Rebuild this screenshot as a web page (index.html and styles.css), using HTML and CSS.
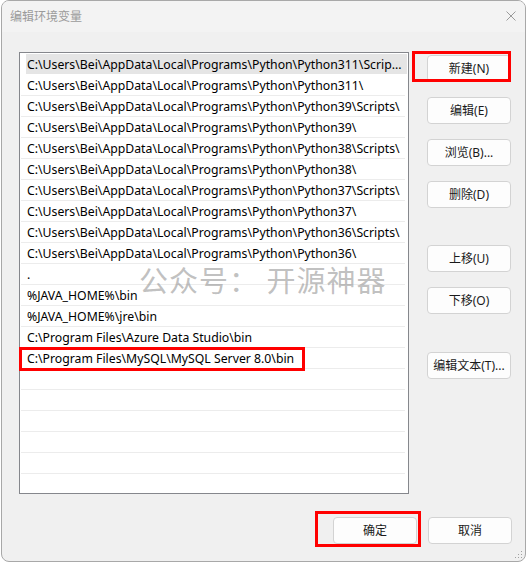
FILE: index.html
```html
<!DOCTYPE html>
<html lang="zh-CN">
<head>
<meta charset="utf-8">
<title>编辑环境变量</title>
<link rel="stylesheet" href="styles.css">
</head>
<body>
<div class="window">
  <div class="titlebar">
    <span class="title">编辑环境变量</span>
    <svg class="close" width="10" height="10" viewBox="0 0 10 10"><path d="M0.5 0.5 L9.5 9.5 M9.5 0.5 L0.5 9.5" stroke="#9a9a9a" stroke-width="1" fill="none"/></svg>
  </div>
  <div class="content">
    <div class="main">
      <div class="list">
        <div class="row selected">C:\Users\Bei\AppData\Local\Programs\Python\Python311\Scrip...</div>
        <div class="row">C:\Users\Bei\AppData\Local\Programs\Python\Python311\</div>
        <div class="row">C:\Users\Bei\AppData\Local\Programs\Python\Python39\Scripts\</div>
        <div class="row">C:\Users\Bei\AppData\Local\Programs\Python\Python39\</div>
        <div class="row">C:\Users\Bei\AppData\Local\Programs\Python\Python38\Scripts\</div>
        <div class="row">C:\Users\Bei\AppData\Local\Programs\Python\Python38\</div>
        <div class="row">C:\Users\Bei\AppData\Local\Programs\Python\Python37\Scripts\</div>
        <div class="row">C:\Users\Bei\AppData\Local\Programs\Python\Python37\</div>
        <div class="row">C:\Users\Bei\AppData\Local\Programs\Python\Python36\Scripts\</div>
        <div class="row">C:\Users\Bei\AppData\Local\Programs\Python\Python36\</div>
        <div class="row">.</div>
        <div class="row">%JAVA_HOME%\bin</div>
        <div class="row">%JAVA_HOME%\jre\bin</div>
        <div class="row">C:\Program Files\Azure Data Studio\bin</div>
        <div class="row marked">C:\Program Files\MySQL\MySQL Server 8.0\bin<span class="mark mark-row"></span></div>
        <div class="row"></div>
        <div class="row"></div>
        <div class="row"></div>
        <div class="row"></div>
        <div class="row"></div>
        <div class="row last"></div>
      </div>
      <div class="side">
        <div class="group">
          <button class="btn marked-btn">新建(N)<span class="mark mark-new"></span></button>
          <button class="btn">编辑(E)</button>
          <button class="btn">浏览(B)...</button>
          <button class="btn">删除(D)</button>
        </div>
        <div class="group group-move">
          <button class="btn">上移(U)</button>
          <button class="btn">下移(O)</button>
        </div>
        <div class="group group-text">
          <button class="btn">编辑文本(T)...</button>
        </div>
      </div>
    </div>
    <div class="footer">
      <button class="btn marked-btn">确定<span class="mark mark-ok"></span></button>
      <button class="btn">取消</button>
    </div>
    <div class="watermark">公众号： 开源神器</div>
    <svg class="grip" width="9" height="9" viewBox="0 0 9 9">
      <rect x="7" y="1" width="1" height="1" fill="#a0a0a0"/>
      <rect x="4" y="4" width="1" height="1" fill="#a0a0a0"/>
      <rect x="7" y="4" width="1" height="1" fill="#a0a0a0"/>
      <rect x="1" y="7" width="1" height="1" fill="#a0a0a0"/>
      <rect x="4" y="7" width="1" height="1" fill="#a0a0a0"/>
      <rect x="7" y="7" width="1" height="1" fill="#a0a0a0"/>
    </svg>
  </div>
</div>
</body>
</html>
```
FILE: styles.css
```css
* { box-sizing: border-box; }
html, body { margin: 0; padding: 0; }
body {
  width: 527px;
  height: 563px;
  background: #ffffff;
  font-family: "Noto Sans", "Noto Sans CJK SC", sans-serif;
  font-size: 12px;
  color: #000;
  overflow: hidden;
}
.window {
  margin-left: 1px;
  width: 525px;
  height: 562px;
  border: 1px solid #a8a8a8;
  border-radius: 8px;
  background: #f0f0f0;
  overflow: hidden;
  display: flex;
  flex-direction: column;
}
.titlebar {
  height: 31px;
  flex: none;
  background: #f3f3f3;
  display: flex;
  align-items: center;
  padding: 0 9px 0 8px;
  justify-content: space-between;
}
.title {
  font-family: "Noto Sans CJK SC", sans-serif;
  font-size: 12px;
  color: #9b9b9b;
  margin-top: -3px;
}
.close { margin-top: -1px; }
.content {
  flex: 1;
  position: relative;
  padding: 20px 0 0 17px;
  display: flex;
  flex-direction: column;
}
.main {
  display: flex;
  gap: 18px;
}
.list {
  width: 390px;
  height: 442px;
  border: 1px solid #85878c;
  background: #fff;
  padding: 1px 1px 0 1px;
  display: flex;
  flex-direction: column;
}
.row {
  position: relative;
  height: 21px;
  flex: none;
  border-bottom: 1px solid #ececec;
  padding-left: 6px;
  font-size: 12.25px;
  line-height: 21px;
  white-space: nowrap;
  overflow: hidden;
  margin-right: 2px;
}
.row.selected {
  background: #e5e5e5;
  margin-left: 5px;
  padding-left: 1px;
  margin-right: 0;
  border-bottom-color: #fff;
}
.row.last { border-bottom: none; }
.row.marked { overflow: visible; }
.side {
  display: flex;
  flex-direction: column;
  padding-top: 3px;
}
.group {
  display: flex;
  flex-direction: column;
  gap: 15px;
}
.group-move { margin-top: 37px; }
.group-text { margin-top: 38px; }
.btn {
  position: relative;
  width: 84px;
  height: 27px;
  border: 1px solid #d3d3d3;
  border-radius: 4px;
  background: #fdfdfd;
  font-family: "Noto Sans", "Noto Sans CJK SC", sans-serif;
  font-size: 12px;
  color: #1a1a1a;
  padding: 0;
  line-height: 25px;
  text-align: center;
}
.footer {
  display: flex;
  justify-content: flex-end;
  gap: 11px;
  padding-right: 13px;
  margin-top: 23px;
}
.mark {
  position: absolute;
  border: 3px solid #ff0000;
  pointer-events: none;
}
.mark-row {
  left: -2px;
  top: -1px;
  width: 286px;
  height: 24px;
}
.mark-new {
  left: -16px;
  top: -5px;
  width: 99px;
  height: 31px;
}
.mark-ok {
  left: -19px;
  top: -7px;
  width: 106px;
  height: 36px;
}
.watermark {
  position: absolute;
  left: 137px;
  top: 227px;
  font-family: "Noto Sans CJK SC", sans-serif;
  font-size: 29px;
  line-height: 40px;
  color: rgba(140, 140, 140, 0.55);
  white-space: pre;
  letter-spacing: 1px;
}
.grip {
  position: absolute;
  right: 2px;
  bottom: 2px;
}
```
